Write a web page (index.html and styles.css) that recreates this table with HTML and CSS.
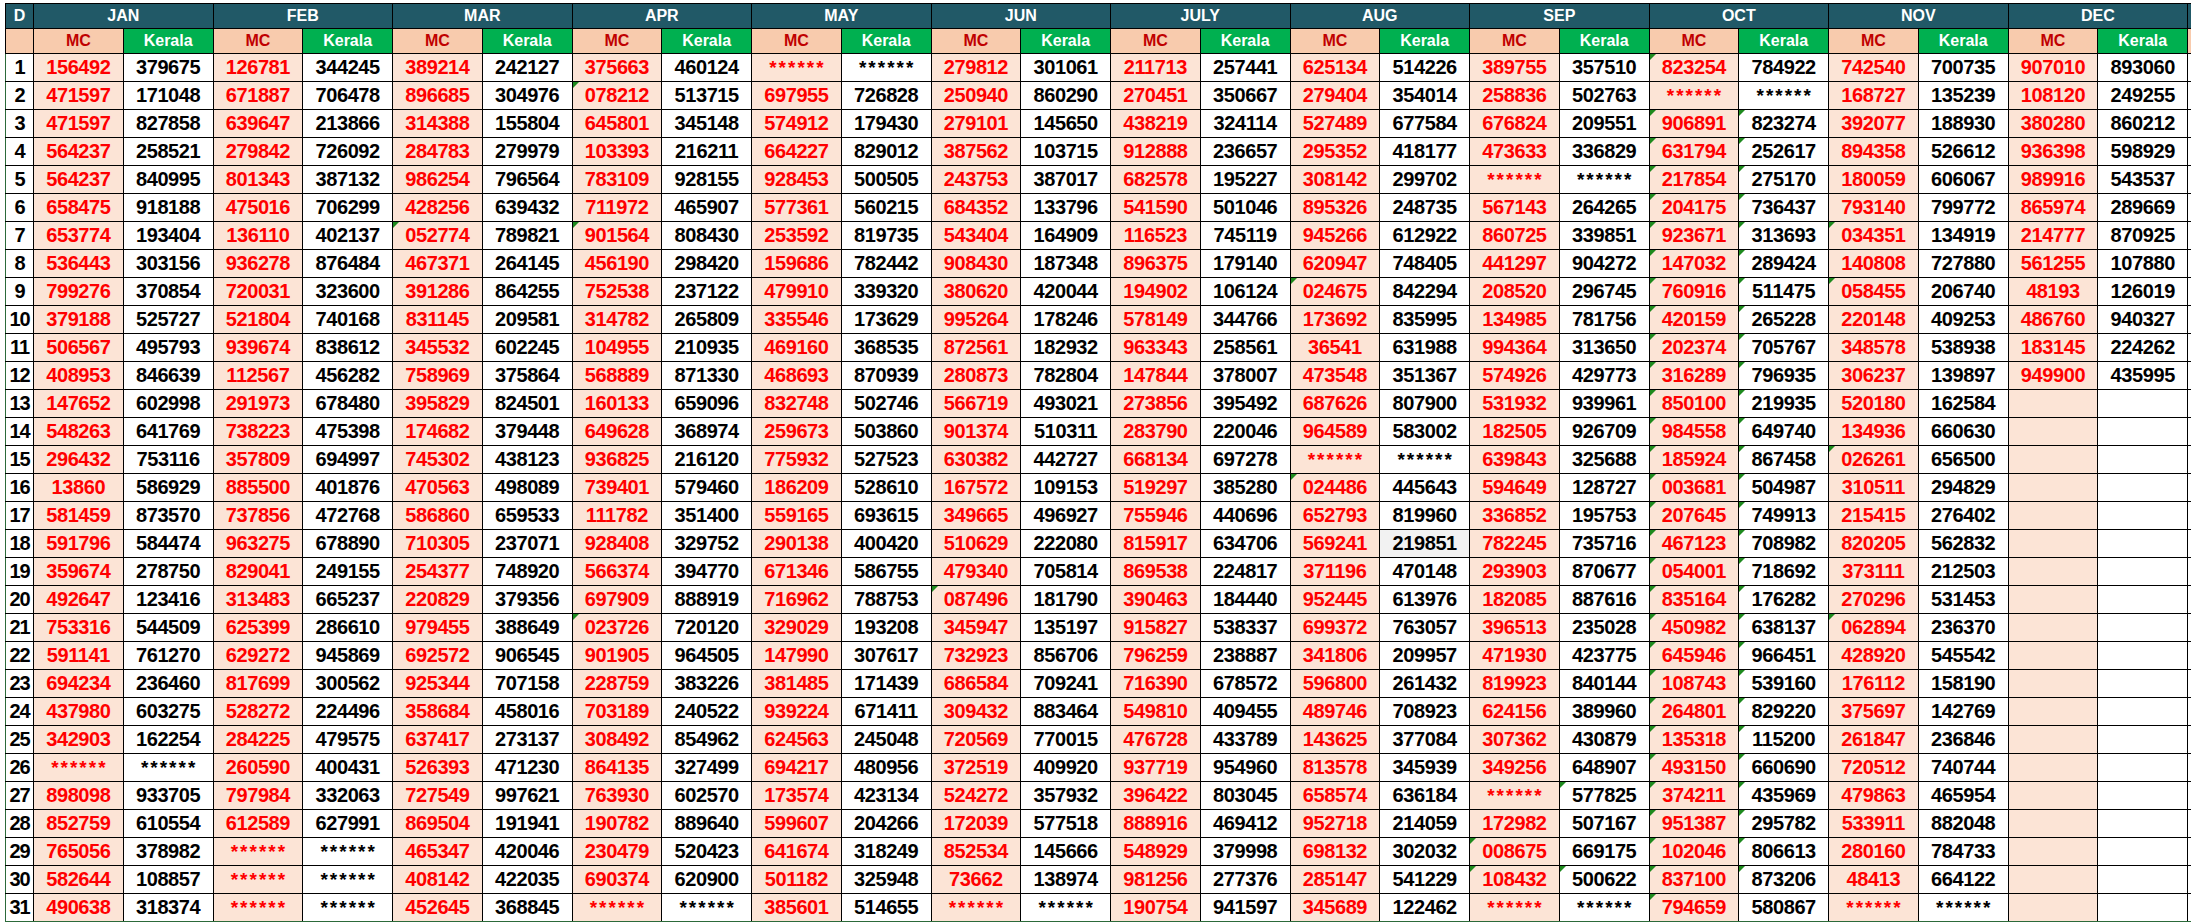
FILE: index.html
```html
<!DOCTYPE html>
<html lang="en">
<head>
<meta charset="utf-8">
<title>MC / Kerala chart</title>
<link rel="stylesheet" href="styles.css">
</head>
<body>
<table class="sheet">
<colgroup>
<col class="c-d">
<col class="c-v"><col class="c-v"><col class="c-v"><col class="c-v"><col class="c-v"><col class="c-v">
<col class="c-v"><col class="c-v"><col class="c-v"><col class="c-v"><col class="c-v"><col class="c-v">
<col class="c-v"><col class="c-v"><col class="c-v"><col class="c-v"><col class="c-v"><col class="c-v">
<col class="c-v"><col class="c-v"><col class="c-v"><col class="c-v"><col class="c-v"><col class="c-v">
<col class="c-x">
</colgroup>
<thead>
<tr class="months">
<th>D</th>
<th colspan="2">JAN</th><th colspan="2">FEB</th><th colspan="2">MAR</th><th colspan="2">APR</th>
<th colspan="2">MAY</th><th colspan="2">JUN</th><th colspan="2">JULY</th><th colspan="2">AUG</th>
<th colspan="2">SEP</th><th colspan="2">OCT</th><th colspan="2">NOV</th><th colspan="2">DEC</th>
<th></th>
</tr>
<tr class="sub">
<th class="d2"></th>
<th class="mc">MC</th><th class="ke">Kerala</th><th class="mc">MC</th><th class="ke">Kerala</th>
<th class="mc">MC</th><th class="ke">Kerala</th><th class="mc">MC</th><th class="ke">Kerala</th>
<th class="mc">MC</th><th class="ke">Kerala</th><th class="mc">MC</th><th class="ke">Kerala</th>
<th class="mc">MC</th><th class="ke">Kerala</th><th class="mc">MC</th><th class="ke">Kerala</th>
<th class="mc">MC</th><th class="ke">Kerala</th><th class="mc">MC</th><th class="ke">Kerala</th>
<th class="mc">MC</th><th class="ke">Kerala</th><th class="mc">MC</th><th class="ke">Kerala</th>
<th class="d2"></th>
</tr>
</thead>
<tbody>
<tr><td>1</td><td>156492</td><td>379675</td><td>126781</td><td>344245</td><td>389214</td><td>242127</td><td>375663</td><td>460124</td><td class="s">******</td><td class="s">******</td><td>279812</td><td>301061</td><td>211713</td><td>257441</td><td>625134</td><td>514226</td><td>389755</td><td>357510</td><td class="e">823254</td><td>784922</td><td>742540</td><td>700735</td><td>907010</td><td>893060</td><td class="x"></td></tr>
<tr><td>2</td><td>471597</td><td>171048</td><td>671887</td><td>706478</td><td>896685</td><td>304976</td><td class="e">078212</td><td>513715</td><td>697955</td><td>726828</td><td>250940</td><td>860290</td><td>270451</td><td>350667</td><td>279404</td><td>354014</td><td>258836</td><td>502763</td><td class="s">******</td><td class="s">******</td><td>168727</td><td>135239</td><td>108120</td><td>249255</td><td class="x"></td></tr>
<tr><td>3</td><td>471597</td><td>827858</td><td>639647</td><td>213866</td><td>314388</td><td>155804</td><td>645801</td><td>345148</td><td>574912</td><td>179430</td><td>279101</td><td>145650</td><td>438219</td><td>324114</td><td>527489</td><td>677584</td><td>676824</td><td>209551</td><td class="e">906891</td><td class="e">823274</td><td>392077</td><td>188930</td><td>380280</td><td>860212</td><td class="x"></td></tr>
<tr><td>4</td><td>564237</td><td>258521</td><td>279842</td><td>726092</td><td>284783</td><td>279979</td><td>103393</td><td>216211</td><td>664227</td><td>829012</td><td>387562</td><td>103715</td><td>912888</td><td>236657</td><td>295352</td><td>418177</td><td>473633</td><td>336829</td><td class="e">631794</td><td class="e">252617</td><td>894358</td><td>526612</td><td>936398</td><td>598929</td><td class="x"></td></tr>
<tr><td>5</td><td>564237</td><td>840995</td><td>801343</td><td>387132</td><td>986254</td><td>796564</td><td>783109</td><td>928155</td><td>928453</td><td>500505</td><td>243753</td><td>387017</td><td>682578</td><td>195227</td><td>308142</td><td>299702</td><td class="s">******</td><td class="s">******</td><td class="e">217854</td><td class="e">275170</td><td>180059</td><td>606067</td><td>989916</td><td>543537</td><td class="x"></td></tr>
<tr><td>6</td><td>658475</td><td>918188</td><td>475016</td><td>706299</td><td>428256</td><td>639432</td><td>711972</td><td>465907</td><td>577361</td><td>560215</td><td>684352</td><td>133796</td><td>541590</td><td>501046</td><td>895326</td><td>248735</td><td>567143</td><td>264265</td><td class="e">204175</td><td class="e">736437</td><td>793140</td><td>799772</td><td>865974</td><td>289669</td><td class="x"></td></tr>
<tr><td>7</td><td>653774</td><td>193404</td><td>136110</td><td>402137</td><td class="e">052774</td><td>789821</td><td class="e">901564</td><td>808430</td><td>253592</td><td>819735</td><td>543404</td><td>164909</td><td>116523</td><td>745119</td><td>945266</td><td>612922</td><td>860725</td><td>339851</td><td class="e">923671</td><td class="e">313693</td><td class="e">034351</td><td>134919</td><td>214777</td><td>870925</td><td class="x"></td></tr>
<tr><td>8</td><td>536443</td><td>303156</td><td>936278</td><td>876484</td><td>467371</td><td>264145</td><td>456190</td><td>298420</td><td>159686</td><td>782442</td><td>908430</td><td>187348</td><td>896375</td><td>179140</td><td>620947</td><td>748405</td><td>441297</td><td>904272</td><td class="e">147032</td><td class="e">289424</td><td>140808</td><td>727880</td><td>561255</td><td>107880</td><td class="x"></td></tr>
<tr><td>9</td><td>799276</td><td>370854</td><td>720031</td><td>323600</td><td>391286</td><td>864255</td><td>752538</td><td>237122</td><td>479910</td><td>339320</td><td>380620</td><td>420044</td><td>194902</td><td>106124</td><td class="e">024675</td><td>842294</td><td>208520</td><td>296745</td><td class="e">760916</td><td class="e">511475</td><td class="e">058455</td><td>206740</td><td>48193</td><td>126019</td><td class="x"></td></tr>
<tr><td>10</td><td>379188</td><td>525727</td><td>521804</td><td>740168</td><td>831145</td><td>209581</td><td>314782</td><td>265809</td><td>335546</td><td>173629</td><td>995264</td><td>178246</td><td>578149</td><td>344766</td><td>173692</td><td>835995</td><td>134985</td><td>781756</td><td class="e">420159</td><td class="e">265228</td><td>220148</td><td>409253</td><td>486760</td><td>940327</td><td class="x"></td></tr>
<tr><td>11</td><td>506567</td><td>495793</td><td>939674</td><td>838612</td><td>345532</td><td>602245</td><td>104955</td><td>210935</td><td>469160</td><td>368535</td><td>872561</td><td>182932</td><td>963343</td><td>258561</td><td>36541</td><td>631988</td><td>994364</td><td>313650</td><td class="e">202374</td><td class="e">705767</td><td>348578</td><td>538938</td><td>183145</td><td>224262</td><td class="x"></td></tr>
<tr><td>12</td><td>408953</td><td>846639</td><td>112567</td><td>456282</td><td>758969</td><td>375864</td><td>568889</td><td>871330</td><td>468693</td><td>870939</td><td>280873</td><td>782804</td><td>147844</td><td>378007</td><td>473548</td><td>351367</td><td>574926</td><td>429773</td><td class="e">316289</td><td class="e">796935</td><td>306237</td><td>139897</td><td>949900</td><td>435995</td><td class="x"></td></tr>
<tr><td>13</td><td>147652</td><td>602998</td><td>291973</td><td>678480</td><td>395829</td><td>824501</td><td>160133</td><td>659096</td><td>832748</td><td>502746</td><td>566719</td><td>493021</td><td>273856</td><td>395492</td><td>687626</td><td>807900</td><td>531932</td><td>939961</td><td class="e">850100</td><td class="e">219935</td><td>520180</td><td>162584</td><td></td><td></td><td class="x"></td></tr>
<tr><td>14</td><td>548263</td><td>641769</td><td>738223</td><td>475398</td><td>174682</td><td>379448</td><td>649628</td><td>368974</td><td>259673</td><td>503860</td><td>901374</td><td>510311</td><td>283790</td><td>220046</td><td>964589</td><td>583002</td><td>182505</td><td>926709</td><td class="e">984558</td><td class="e">649740</td><td>134936</td><td>660630</td><td></td><td></td><td class="x"></td></tr>
<tr><td>15</td><td>296432</td><td>753116</td><td>357809</td><td>694997</td><td>745302</td><td>438123</td><td>936825</td><td>216120</td><td>775932</td><td>527523</td><td>630382</td><td>442727</td><td>668134</td><td>697278</td><td class="s">******</td><td class="s">******</td><td>639843</td><td>325688</td><td class="e">185924</td><td class="e">867458</td><td class="e">026261</td><td>656500</td><td></td><td></td><td class="x"></td></tr>
<tr><td>16</td><td>13860</td><td>586929</td><td>885500</td><td>401876</td><td>470563</td><td>498089</td><td>739401</td><td>579460</td><td>186209</td><td>528610</td><td>167572</td><td>109153</td><td>519297</td><td>385280</td><td class="e">024486</td><td>445643</td><td>594649</td><td>128727</td><td class="e">003681</td><td class="e">504987</td><td>310511</td><td>294829</td><td></td><td></td><td class="x"></td></tr>
<tr><td>17</td><td>581459</td><td>873570</td><td>737856</td><td>472768</td><td>586860</td><td>659533</td><td>111782</td><td>351400</td><td>559165</td><td>693615</td><td>349665</td><td>496927</td><td>755946</td><td>440696</td><td>652793</td><td>819960</td><td>336852</td><td>195753</td><td class="e">207645</td><td class="e">749913</td><td>215415</td><td>276402</td><td></td><td></td><td class="x"></td></tr>
<tr><td>18</td><td>591796</td><td>584474</td><td>963275</td><td>678890</td><td>710305</td><td>237071</td><td>928408</td><td>329752</td><td>290138</td><td>400420</td><td>510629</td><td>222080</td><td>815917</td><td>634706</td><td>569241</td><td class="g">219851</td><td>782245</td><td>735716</td><td class="e">467123</td><td class="e">708982</td><td>820205</td><td>562832</td><td></td><td></td><td class="x"></td></tr>
<tr><td>19</td><td>359674</td><td>278750</td><td>829041</td><td>249155</td><td>254377</td><td>748920</td><td>566374</td><td>394770</td><td>671346</td><td>586755</td><td>479340</td><td>705814</td><td>869538</td><td>224817</td><td>371196</td><td>470148</td><td>293903</td><td>870677</td><td class="e">054001</td><td class="e">718692</td><td>373111</td><td>212503</td><td></td><td></td><td class="x"></td></tr>
<tr><td>20</td><td>492647</td><td>123416</td><td>313483</td><td>665237</td><td>220829</td><td>379356</td><td>697909</td><td>888919</td><td>716962</td><td>788753</td><td class="e">087496</td><td>181790</td><td>390463</td><td>184440</td><td>952445</td><td>613976</td><td>182085</td><td>887616</td><td class="e">835164</td><td class="e">176282</td><td>270296</td><td>531453</td><td></td><td></td><td class="x"></td></tr>
<tr><td>21</td><td>753316</td><td>544509</td><td>625399</td><td>286610</td><td>979455</td><td>388649</td><td class="e">023726</td><td>720120</td><td>329029</td><td>193208</td><td>345947</td><td>135197</td><td>915827</td><td>538337</td><td>699372</td><td>763057</td><td>396513</td><td>235028</td><td class="e">450982</td><td class="e">638137</td><td class="e">062894</td><td>236370</td><td></td><td></td><td class="x"></td></tr>
<tr><td>22</td><td>591141</td><td>761270</td><td>629272</td><td>945869</td><td>692572</td><td>906545</td><td>901905</td><td>964505</td><td>147990</td><td>307617</td><td>732923</td><td>856706</td><td>796259</td><td>238887</td><td>341806</td><td>209957</td><td>471930</td><td>423775</td><td class="e">645946</td><td class="e">966451</td><td>428920</td><td>545542</td><td></td><td></td><td class="x"></td></tr>
<tr><td>23</td><td>694234</td><td>236460</td><td>817699</td><td>300562</td><td>925344</td><td>707158</td><td>228759</td><td>383226</td><td>381485</td><td>171439</td><td>686584</td><td>709241</td><td>716390</td><td>678572</td><td>596800</td><td>261432</td><td>819923</td><td>840144</td><td class="e">108743</td><td class="e">539160</td><td>176112</td><td>158190</td><td></td><td></td><td class="x"></td></tr>
<tr><td>24</td><td>437980</td><td>603275</td><td>528272</td><td>224496</td><td>358684</td><td>458016</td><td>703189</td><td>240522</td><td>939224</td><td>671411</td><td>309432</td><td>883464</td><td>549810</td><td>409455</td><td>489746</td><td>708923</td><td>624156</td><td>389960</td><td class="e">264801</td><td class="e">829220</td><td>375697</td><td>142769</td><td></td><td></td><td class="x"></td></tr>
<tr><td>25</td><td>342903</td><td>162254</td><td>284225</td><td>479575</td><td>637417</td><td>273137</td><td>308492</td><td>854962</td><td>624563</td><td>245048</td><td>720569</td><td>770015</td><td>476728</td><td>433789</td><td>143625</td><td>377084</td><td>307362</td><td>430879</td><td class="e">135318</td><td class="e">115200</td><td>261847</td><td>236846</td><td></td><td></td><td class="x"></td></tr>
<tr><td>26</td><td class="s">******</td><td class="s">******</td><td>260590</td><td>400431</td><td>526393</td><td>471230</td><td>864135</td><td>327499</td><td>694217</td><td>480956</td><td>372519</td><td>409920</td><td>937719</td><td>954960</td><td>813578</td><td>345939</td><td>349256</td><td>648907</td><td class="e">493150</td><td class="e">660690</td><td>720512</td><td>740744</td><td></td><td></td><td class="x"></td></tr>
<tr><td>27</td><td>898098</td><td>933705</td><td>797984</td><td>332063</td><td>727549</td><td>997621</td><td>763930</td><td>602570</td><td>173574</td><td>423134</td><td>524272</td><td>357932</td><td>396422</td><td>803045</td><td>658574</td><td>636184</td><td class="s">******</td><td class="e">577825</td><td class="e">374211</td><td class="e">435969</td><td>479863</td><td>465954</td><td></td><td></td><td class="x"></td></tr>
<tr><td>28</td><td>852759</td><td>610554</td><td>612589</td><td>627991</td><td>869504</td><td>191941</td><td>190782</td><td>889640</td><td>599607</td><td>204266</td><td>172039</td><td>577518</td><td>888916</td><td>469412</td><td>952718</td><td>214059</td><td>172982</td><td>507167</td><td class="e">951387</td><td class="e">295782</td><td>533911</td><td>882048</td><td></td><td></td><td class="x"></td></tr>
<tr><td>29</td><td>765056</td><td>378982</td><td class="s">******</td><td class="s">******</td><td>465347</td><td>420046</td><td>230479</td><td>520423</td><td>641674</td><td>318249</td><td>852534</td><td>145666</td><td>548929</td><td>379998</td><td>698132</td><td>302032</td><td class="e">008675</td><td>669175</td><td class="e">102046</td><td class="e">806613</td><td>280160</td><td>784733</td><td></td><td></td><td class="x"></td></tr>
<tr><td>30</td><td>582644</td><td>108857</td><td class="s">******</td><td class="s">******</td><td>408142</td><td>422035</td><td>690374</td><td>620900</td><td>501182</td><td>325948</td><td>73662</td><td>138974</td><td>981256</td><td>277376</td><td>285147</td><td>541229</td><td class="e">108432</td><td class="e">500622</td><td class="e">837100</td><td class="e">873206</td><td>48413</td><td>664122</td><td></td><td></td><td class="x"></td></tr>
<tr><td>31</td><td>490638</td><td>318374</td><td class="s">******</td><td class="s">******</td><td>452645</td><td>368845</td><td class="s">******</td><td class="s">******</td><td>385601</td><td>514655</td><td class="s">******</td><td class="s">******</td><td>190754</td><td>941597</td><td>345689</td><td>122462</td><td class="s">******</td><td class="s">******</td><td class="e">794659</td><td>580867</td><td class="s">******</td><td class="s">******</td><td></td><td></td><td class="x"></td></tr>
</tbody>
</table>
</body>
</html>
```

FILE: styles.css
```css
html, body {
  margin: 0;
  background: #ffffff;
}

body {
  padding: 3px 0 0 5px;
  overflow: hidden;
  font-family: "Liberation Sans", Arial, sans-serif;
}

.sheet {
  border-collapse: collapse;
  table-layout: fixed;
  width: 2222px;
}

.c-d { width: 28px; }
.c-v { width: 89.75px; }
.c-x { width: 40px; }

.sheet th,
.sheet td {
  border: 1px solid #000000;
  padding: 0;
  text-align: center;
  vertical-align: middle;
  font-weight: bold;
  white-space: nowrap;
  overflow: hidden;
}

.months th {
  height: 24px;
  background: #215967;
  color: #ffffff;
  font-size: 16px;
}

.sub th {
  height: 24px;
  font-size: 16px;
}

.sub .d2 { background: #f8cbad; }
.sub .mc { background: #f8cbad; color: #c00000; }
.sub .ke { background: #00b050; color: #ffffff; }

.sheet tbody td {
  height: 27px;
  font-size: 20px;
  letter-spacing: -0.4px;
  color: #000000;
  background: #ffffff;
}

.sheet tbody td:first-child {
  letter-spacing: -1px;
  border-left-color: #2c6a3a;
}

.sheet tbody td:nth-child(2n) {
  background: #fce4d6;
  color: #ff0000;
}

.sheet tbody tr:last-child td {
  border-bottom-color: #2c6a3a;
}

.sheet tbody td.x {
  background: #ffffff;
}

.sheet tbody td.g {
  background: #f2f2f2;
}

.sheet tbody td.s {
  font-size: 19px;
  letter-spacing: 2px;
  text-indent: 2px;
}

.sheet td.e {
  position: relative;
}

.sheet td.e::before {
  content: "";
  position: absolute;
  left: 0;
  top: 0;
  border-top: 6px solid #1e8a1e;
  border-right: 6px solid transparent;
}
```
